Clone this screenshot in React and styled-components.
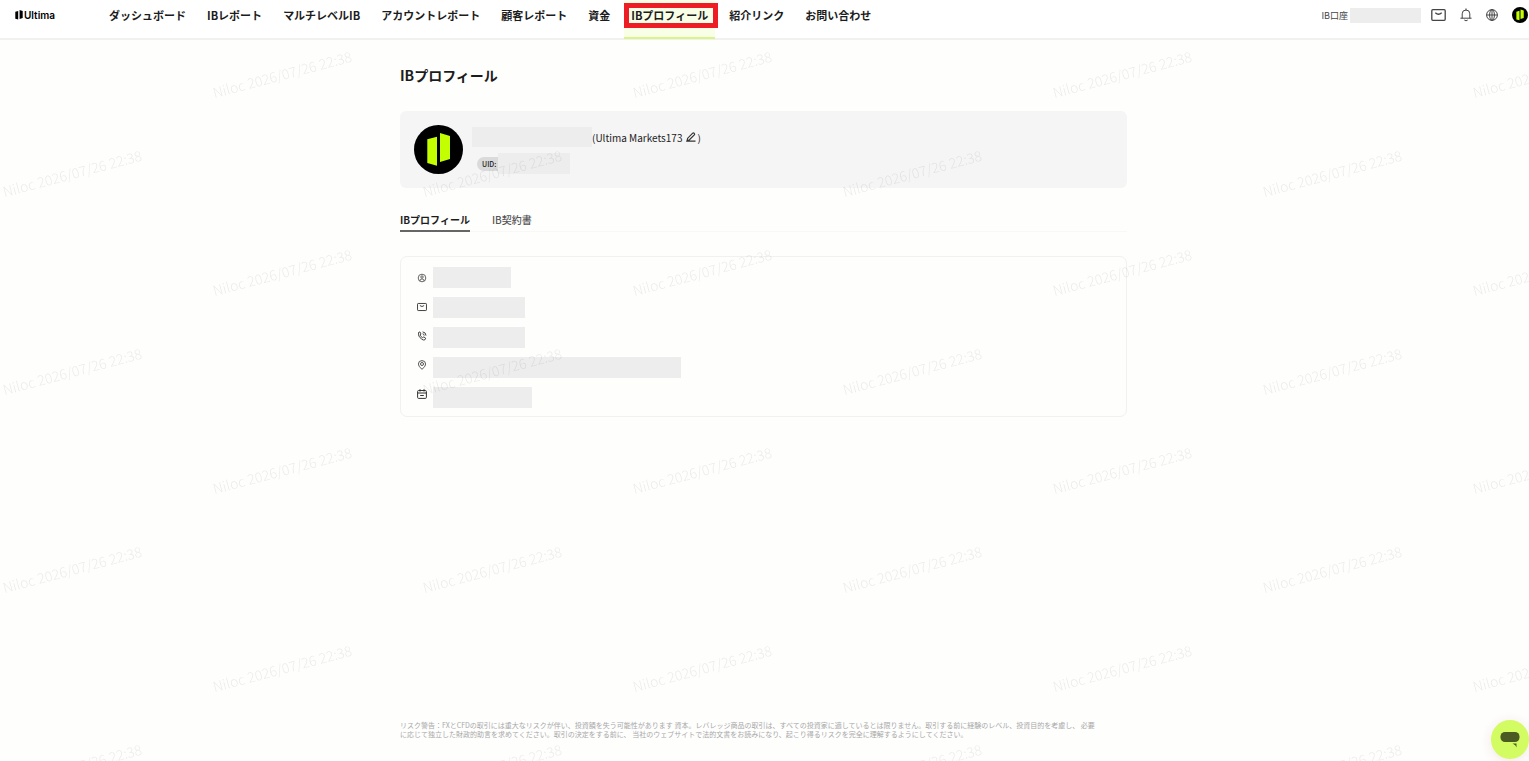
import React from 'react';
import styled, { createGlobalStyle, ThemeProvider } from 'styled-components';

const theme = {
    colors: {
        black: '#1c1c1c',
        grey: '#555555',
        lightgrey: '#a8a8a8',
        mask: '#ededed',
        panel: '#f5f5f5',
        border: '#f1f1ef',
        lime: '#c3ff00',
        active: '#f9fee7',
        underline: '#d8f58a',
        chat: '#d3fb62',
        red: '#ee1c25',
    },
};

const links = [
    'ダッシュボード',
    'IBレポート',
    'マルチレベルIB',
    'アカウントレポート',
    '顧客レポート',
    '資金',
    'IBプロフィール',
    '紹介リンク',
    'お問い合わせ',
];

const watermarks = Array.from({ length: 64 }, (_, i) => (Math.floor(i / 8) + i) % 2 === 1);

const Mark = ({ size }) => (
    <svg width={size} height={size} viewBox="0 0 49 49" aria-hidden="true">
        <circle cx="24.5" cy="24.5" r="24.5" fill="#000" />
        <path fill={theme.colors.lime} d="M13.300 14.300L23 11.700V40.700L13.300 38ZM26 8L36 11V34L26 37Z" />
    </svg>
);

const MailIcon = ({ width, height, stroke }) => (
    <svg width={width} height={height} viewBox="0 0 15 12" fill="none" stroke="#444" strokeWidth={stroke} aria-hidden="true">
        <rect x="0.800" y="0.700" width="13.400" height="10.600" rx="1" />
        <path d="M4.300 3.800Q7.500 6.800 10.700 3.800" />
    </svg>
);

const BellIcon = () => (
    <svg width="12" height="14" viewBox="0 0 12 14" fill="none" stroke="#444" aria-hidden="true">
        <path d="M2.200 10V5.800a3.800 3.800 0 0 1 7.600 0V10M0.800 10.200H11.200M6 2V0.800M4.600 12.300Q6 13.600 7.400 12.300" strokeLinecap="round" />
    </svg>
);

const GlobeIcon = () => (
    <svg width="12" height="12" viewBox="0 0 12 12" fill="none" stroke="#444" strokeWidth="1" aria-hidden="true">
        <circle cx="6" cy="6" r="5.400" />
        <ellipse cx="6" cy="6" rx="2.400" ry="5.400" />
        <path d="M0.600 6H11.400M6 0.600V11.400" />
    </svg>
);

const EditIcon = () => (
    <svg width="10" height="10" viewBox="0 0 10 10" fill="none" stroke="#333" strokeWidth="1.200" aria-hidden="true">
        <path d="M1 9L1.700 6.200L6.700 1.200Q7.400 0.600 8.200 1.300Q9 2.100 8.300 2.900L3.500 7.700ZM1 9.200H9.500" />
    </svg>
);

const UserIcon = () => (
    <svg width="10" height="10" viewBox="0 0 10 10" fill="none" stroke="#555" strokeWidth="0.900" aria-hidden="true">
        <circle cx="5" cy="5" r="3.800" />
        <circle cx="5" cy="4" r="1.200" />
        <path d="M2.800 8Q3 5.900 5 5.900T7.200 8" />
    </svg>
);

const PhoneIcon = () => (
    <svg width="10" height="10" viewBox="0 0 10 10" fill="none" stroke="#444" strokeWidth="1" aria-hidden="true">
        <path d="M1.500 1.500L2.900 0.900L4 3L3.100 4.100Q3.900 5.900 5.700 6.700L6.800 5.900L8.700 7.200L7.900 8.800Q6.800 9.500 4.600 8.200Q0.600 5.200 1.500 1.500ZM5.600 0.900Q8.900 1.200 9 4.600M5.600 2.800Q7.200 3 7.200 4.600" />
    </svg>
);

const PinIcon = () => (
    <svg width="10" height="10" viewBox="0 0 10 10" fill="none" stroke="#555" strokeWidth="1" aria-hidden="true">
        <path d="M5 9.300Q1.400 6.600 1.400 4.100A3.600 3.500 0 0 1 8.600 4.100Q8.600 6.600 5 9.300Z" />
        <circle cx="5" cy="4" r="1.500" />
    </svg>
);

const CalendarIcon = () => (
    <svg width="10" height="10" viewBox="0 0 10 10" fill="none" stroke="#333" strokeWidth="1" aria-hidden="true">
        <rect x="0.600" y="1.500" width="8.800" height="7.900" rx="1" />
        <path d="M0.600 4H9.400M3 0.200V2.600M7 0.200V2.600M3.200 6.500H6.800" />
    </svg>
);

const App = () => {
    return (
        <ThemeProvider theme={theme}>
            <GlobalStyle />
            <Page>
                <Header>
                    <Logo href="#">
                        <svg width="8" height="10" viewBox="0 0 8 10" aria-hidden="true">
                            <path fill="#000" d="M0.300 1.800L3.200 1V9.600L0.300 8.800ZM4.600 0L7.700 0.900V8L4.600 8.900Z" />
                        </svg>
                        Ultima
                    </Logo>
                    <Nav>
                        {links.map((link) => (
                            <NavLink href="#" key={link} $active={link === 'IBプロフィール'}>{link}</NavLink>
                        ))}
                    </Nav>
                    <Tools>
                        <Account>
                            IB口座
                            <Mask $width={71} $height={15} />
                        </Account>
                        <IconButton aria-label="メール"><MailIcon width={15} height={12} stroke={1.3} /></IconButton>
                        <IconButton aria-label="通知"><BellIcon /></IconButton>
                        <IconButton aria-label="言語"><GlobeIcon /></IconButton>
                        <IconButton aria-label="アカウント"><Mark size={16} /></IconButton>
                    </Tools>
                </Header>
                <Main>
                    <Title>IBプロフィール</Title>
                    <ProfileCard>
                        <Mark size={49} />
                        <Identity>
                            <NameRow>
                                <Mask $width={120} $height={20} />
                                <span>(Ultima Markets173</span>
                                <IconButton aria-label="編集"><EditIcon /></IconButton>
                                <span>)</span>
                            </NameRow>
                            <UidRow>
                                <Uid>UID:</Uid>
                                <Mask $width={72} $height={21} />
                            </UidRow>
                        </Identity>
                    </ProfileCard>
                    <Tabs role="tablist">
                        <Tab role="tab" aria-selected="true" $active>IBプロフィール</Tab>
                        <Tab role="tab" aria-selected="false">IB契約書</Tab>
                    </Tabs>
                    <Details>
                        <Icons>
                            <UserIcon />
                            <MailIcon width={10} height={10} stroke={1.5} />
                            <PhoneIcon />
                            <PinIcon />
                            <CalendarIcon />
                        </Icons>
                        <Values>
                            <Mask $width={78} $height={21} />
                            <Mask $width={92} $height={21} />
                            <Mask $width={92} $height={21} />
                            <Mask $width={248} $height={21} />
                            <Mask $width={99} $height={21} />
                        </Values>
                    </Details>
                    <Footer>
                        リスク警告：FXとCFDの取引には重大なリスクが伴い、投資額を失う可能性があります 資本。レバレッジ商品の取引は、すべての投資家に適しているとは限りません。取引する前に経験のレベル、投資目的を考慮し、 必要<br />
                        に応じて独立した財政的助言を求めてください。取引の決定をする前に、 当社のウェブサイトで法的文書をお読みになり、起こり得るリスクを完全に理解するようにしてください。
                    </Footer>
                </Main>
            </Page>
            <Watermarks aria-hidden="true">
                {watermarks.map((shown, i) => (
                    <Watermark key={i}>{shown && <span>Niloc 2026/07/26 22:38</span>}</Watermark>
                ))}
            </Watermarks>
            <Chat aria-label="チャット">
                <svg width="20" height="16" viewBox="0 0 20 16" aria-hidden="true">
                    <rect x="0.500" width="19" height="10" rx="4.500" fill="#4b5a22" />
                    <path d="M12.500 11.500H16.500V15.500Q16 12.800 12.500 11.500Z" fill="#4b5a22" />
                </svg>
            </Chat>
        </ThemeProvider>
    )
}

export default App;

const GlobalStyle = createGlobalStyle`
    *, *::after {
        box-sizing: border-box;
    }
    body {
        margin: 0;
        background-color: #fefefd;
        font-family: 'Noto Sans CJK JP', sans-serif;
        color: ${({theme}) => theme.colors.black};
    }
    a {
        text-decoration: none;
        color: inherit;
    }
    svg {
        display: block;
        flex-shrink: 0;
    }
`

const Page = styled.div`
    display: flex;
    flex-direction: column;
    min-height: 100vh;
`

const Header = styled.header`
    display: flex;
    align-items: flex-start;
    height: 40px;
    padding: 0 1px 0 15px;
    border-bottom: 2px solid ${({theme}) => theme.colors.border};
    background-color: white;
`

const Logo = styled.a`
    display: flex;
    align-items: center;
    gap: 1px;
    width: 87px;
    height: 30px;
    font-family: Inter, sans-serif;
    font-size: 10px;
    font-weight: 600;
    color: black;
`

const Nav = styled.nav`
    display: flex;
    gap: 7px;
    flex: 1;
`

const NavLink = styled.a`
    position: relative;
    height: 39px;
    padding: 0 7px;
    font-size: 11px;
    font-weight: 700;
    line-height: 30px;
    white-space: nowrap;
    ${({theme, $active}) => $active && `
        background-color: ${theme.colors.active};
        border-bottom: 2px solid ${theme.colors.underline};
        &::after {
            content: '';
            position: absolute;
            top: 3px;
            left: 0;
            right: -3px;
            height: 25px;
            border: 5px solid ${theme.colors.red};
        }
    `}
`

const Tools = styled.div`
    display: flex;
    align-items: center;
    gap: 14px;
    height: 30px;
`

const Account = styled.div`
    display: flex;
    align-items: center;
    gap: 2px;
    margin-right: -4px;
    font-size: 9px;
    color: #444444;
`

const Mask = styled.div`
    flex-shrink: 0;
    width: ${({$width}) => $width}px;
    height: ${({$height}) => $height}px;
    background-color: ${({theme}) => theme.colors.mask};
`

const IconButton = styled.button`
    display: flex;
    padding: 0;
    border: none;
    background: none;
    cursor: pointer;
`

const Main = styled.main`
    display: flex;
    flex-direction: column;
    flex: 1;
    width: 100%;
    max-width: 747px;
    margin: 0 auto;
    padding: 23px 11px 22px 9px;
`

const Title = styled.h1`
    margin: 0 0 24px;
    font-size: 14px;
    font-weight: 700;
    line-height: 24px;
`

const ProfileCard = styled.section`
    display: flex;
    align-items: center;
    gap: 9px;
    height: 77px;
    padding: 0 14px;
    border-radius: 6px;
    background-color: ${({theme}) => theme.colors.panel};
`

const Identity = styled.div`
    display: flex;
    flex-direction: column;
    gap: 6px;
    padding-top: 2px;
`

const NameRow = styled.div`
    display: flex;
    align-items: center;
    height: 20px;
    font-size: 10px;
    font-weight: 400;
    color: #222222;
    ${IconButton} {
        margin: 0 1px 0 4px;
    }
`

const UidRow = styled.div`
    display: flex;
    align-items: center;
    padding-left: 5px;
`

const Uid = styled.span`
    width: 21px;
    padding-left: 5px;
    border-radius: 7px 0 0 7px;
    background-color: #dadada;
    font-size: 7px;
    font-weight: 500;
    line-height: 14px;
`

const Tabs = styled.div`
    display: flex;
    gap: 22px;
    margin-top: 20px;
    border-bottom: 1px solid #f8f8f6;
`

const Tab = styled.button`
    height: 24px;
    margin-bottom: -1px;
    padding: 2px 0 0;
    border: none;
    border-bottom: 2px solid ${({$active}) => $active ? '#666666' : 'transparent'};
    background: none;
    font-family: inherit;
    font-size: 10px;
    font-weight: ${({$active}) => $active ? 700 : 500};
    line-height: 20px;
    color: ${({theme, $active}) => $active ? theme.colors.black : theme.colors.grey};
    cursor: pointer;
`

const Details = styled.section`
    display: flex;
    gap: 6px;
    margin-top: 24px;
    padding: 10px 16px 8px;
    border: 1px solid ${({theme}) => theme.colors.border};
    border-radius: 7px;
`

const Icons = styled.div`
    display: flex;
    flex-direction: column;
    gap: 19px;
    padding-top: 6px;
`

const Values = styled.div`
    display: flex;
    flex-direction: column;
    gap: 9px;
`

const Footer = styled.footer`
    margin-top: auto;
    font-size: 7px;
    line-height: 9px;
    color: ${({theme}) => theme.colors.lightgrey};
`

const Watermarks = styled.div`
    position: fixed;
    inset: 0;
    display: grid;
    grid-template-columns: repeat(8, 210px);
    grid-auto-rows: 99px;
    padding-top: 24px;
    margin-left: -33px;
    overflow: hidden;
    pointer-events: none;
`

const Watermark = styled.div`
    display: flex;
    align-items: center;
    justify-content: center;
    font-size: 14px;
    font-weight: 300;
    white-space: nowrap;
    color: rgba(0, 0, 0, 0.08);
    transform: rotate(-15deg);
`

const Chat = styled.button`
    position: fixed;
    right: 0;
    bottom: 2px;
    display: flex;
    align-items: center;
    justify-content: center;
    width: 38px;
    height: 39px;
    padding: 0;
    border: none;
    border-radius: 50%;
    background-color: ${({theme}) => theme.colors.chat};
    box-shadow: 0 2px 12px rgba(160, 60, 20, 0.12);
    cursor: pointer;
`
